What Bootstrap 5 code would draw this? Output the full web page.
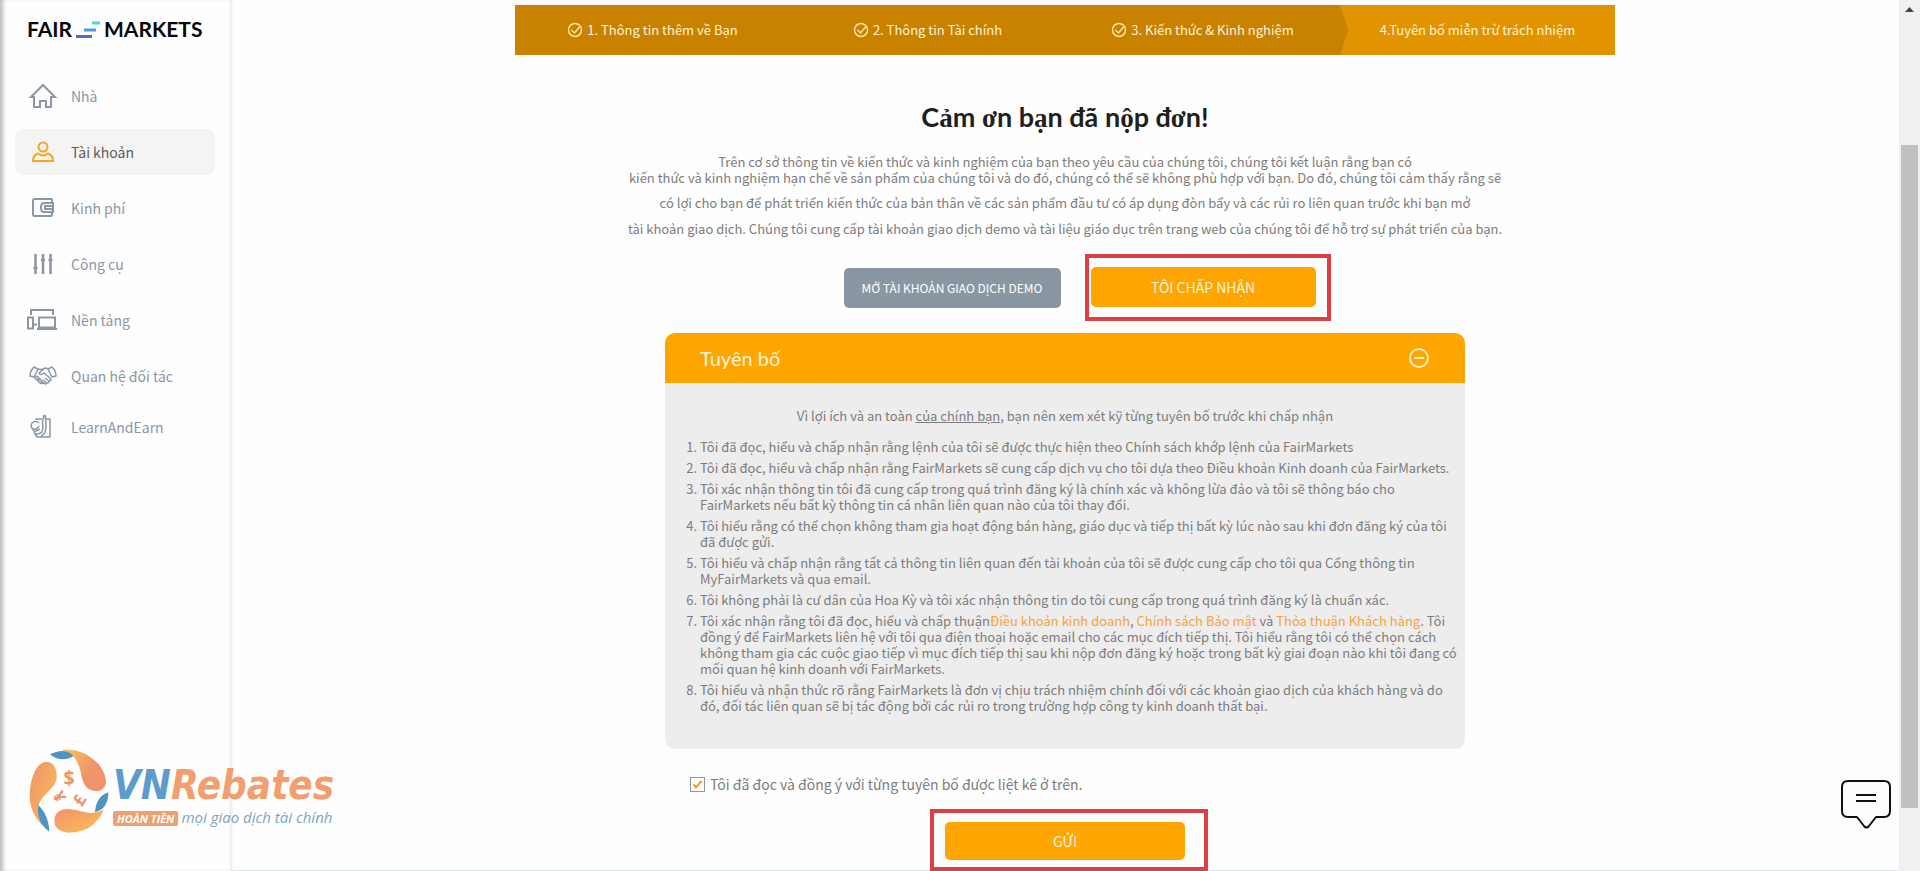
<!DOCTYPE html>
<html lang="vi">
<head>
<meta charset="utf-8">
<meta name="viewport" content="width=device-width, initial-scale=1">
<title>FairMarkets</title>
<link href="https://cdn.jsdelivr.net/npm/bootstrap@5.3.0/dist/css/bootstrap.min.css" rel="stylesheet">
<style>
body{font-family:"Noto Sans CJK SC","Noto Sans",sans-serif;font-size:13px;line-height:16px;color:#7c7c7c;background:#fefefe}
.side{width:231px;border-right:1px solid #e9e9e9;box-shadow:inset 5px 0 4px -2px #bbb,1px 0 3px #eee;padding:0 15px}
.brand{height:58px;padding:0 12px;font:700 21px/58px Lato,"Open Sans",sans-serif;color:#080808;text-decoration:none;gap:4px}
.side-nav{padding-top:15px}
.side-link{height:46px;margin-bottom:10px;border-radius:8px;padding-left:11px;gap:13px;font-size:14px;color:#8b97a3;text-decoration:none}
.side-link.on{background:#f4f4f4;color:#5d5d5d}
.side-link.short{margin-top:-5px}
.side-link svg{width:32px;height:32px;fill:none;stroke:#8b97a3;stroke-width:2}
.side-link svg.fine{stroke-width:1.5}
.side-link.on svg{stroke:#f5a623}
.wide{max-width:1100px}
.steps{height:50px;margin-top:5px;background:#c88200;color:#fff3d6}
.step-now{background:#e29300}
.step-item{gap:4px}
.step-arrow{left:0;top:0;height:100%;width:8px}
h1{font:700 27px/32px Lato,"Open Sans",sans-serif;color:#1f1f1f;margin:46px 0 20px}
h1 span{font-family:"Liberation Serif",serif}
.loose{line-height:26px;margin:4px 0 12px}
.choices{padding-left:44px;margin-bottom:12px}
.act{border:0;border-radius:5px;height:40px;color:#fff6df;background:#ffa500;font-size:14px}
.act.demo{width:217px;background:#8a97a3;color:#fff;font-size:12px;margin-right:24px}
.act.accept{width:225px}
.act.send{width:240px;height:38px}
.ring{border:4px solid #dc4045}
.ring-a{padding:9px 11px 10px 2px}
.ring-b{padding:9px 19px 7px 11px;margin-left:8px}
.panel{max-width:800px;border-radius:10px;background:#ededed;overflow:hidden}
.panel-top{height:50px;background:#ffa500;color:#fff6df;font:400 20px/50px Lato,"Noto Sans",sans-serif;padding:0 35px;border:0}
.panel-body{padding:25px 0 30px 35px}
.panel-body p{padding-right:35px}
.panel-body ol{padding:0;margin:15px 0 0}
.panel-body li{margin-bottom:5px}
.panel-body a{color:#f9a13a;text-decoration:none}
.agree{max-width:800px;padding:25px 0 15px 25px;font-size:14px;line-height:20px;gap:5px}
.agree input{appearance:none;width:15px;height:15px;margin:0;border:1px solid #8a97a3;background:#fff url("data:image/svg+xml,%3Csvg xmlns='http://www.w3.org/2000/svg' viewBox='0 0 13 13'%3E%3Cpath d='M2.500 6.500l2.500 3 5.500-6.500' fill='none' stroke='%23f5a010' stroke-width='2'/%3E%3C/svg%3E")}
.rail{width:21px;background:#f0f0f0;padding:7px 2px 63px}
.thumb{background:#c0c0c0;margin-top:133px}
.mark-logo{left:29px;bottom:37px}
.mark-name{font:italic 700 40px/40px "DejaVu Sans Condensed","DejaVu Sans",sans-serif;color:#f29f70}
.mark-name b{color:#5b9bcd}
.mark-tag{font:italic 400 15px/16px "Open Sans",sans-serif;color:#7ba5bd}
.mark-tag b{background:#f29f70;color:#fff;border-radius:2px;padding:0 4px;font-size:11px;margin-right:3px}
.chat{right:29px;bottom:41px;border:0;background:none;padding:0}
</style>
</head>
<body class="overflow-hidden">
<div class="d-flex vh-100 position-relative">
<aside class="side flex-shrink-0">
<a href="#" class="brand d-flex align-items-center">FAIR<svg width="24" height="17" viewBox="0 0 24 17"><path d="M16 2h8" stroke="#43dccb" stroke-width="3"/><path d="M8 9h12" stroke="#4b9bd5" stroke-width="3"/><path d="M0 15.500h16" stroke="#5a63d0" stroke-width="3"/></svg>MARKETS</a>
<nav class="side-nav">
<a href="#" class="side-link d-flex align-items-center"><svg viewBox="0 0 32 32"><path d="M5 17L17 5l12 12h-4v10h-5v-6h-6v6H8V17z"/></svg>Nhà</a>
<a href="#" class="side-link on d-flex align-items-center"><svg viewBox="0 0 32 32"><circle cx="17" cy="11" r="4.500"/><path d="M12 17.500c-3 1-5 4-5 7.500h20c0-3.500-2-6.500-5-7.500-3 2.500-7 2.500-10 0z"/></svg>Tài khoản</a>
<a href="#" class="side-link d-flex align-items-center"><svg viewBox="0 0 32 32"><path d="M26 11V8q0-1-1-1H9q-2 0-2 2v13q0 2 2 2h16q1 0 1-1v-3M27 11H18q-3 0-3 4.500t3 4.500h9zM27 14h-8v3h8z"/></svg>Kinh phí</a>
<a href="#" class="side-link d-flex align-items-center"><svg viewBox="0 0 32 32"><path d="M9.500 6v20M17 6v20M24.500 6v20M7.500 20h4M15 12h4M22.500 12h4" stroke-width="2.500"/></svg>Công cụ</a>
<a href="#" class="side-link d-flex align-items-center"><svg viewBox="0 0 32 32"><path d="M5 11V6h22v5M2 13.500h5v11H2zM13 13.500h16v10H13zM11 25h20M8 20.500h3"/></svg>Nền tảng</a>
<a href="#" class="side-link d-flex align-items-center"><svg class="fine" viewBox="0 0 32 32" stroke-linejoin="round"><path d="M8 7l4 2-4 8-4-1q0-5 4-9zM26 7l-4 2 4 8 4-1q0-5-4-9zM12 9q4 1 6-.500 2-1 4 .500M18 9l-5 4q1 3 5 0l7 6q0 2-2 2l-4-3M8 17l6 6q3 1 4 0M23 21q0 2-2 2l-4-3M21 23q-1 2-3 0l-3-2M9 18l2-2 2 2-2 3M12 21l2-2 2 2-2 2"/></svg>Quan hệ đối tác</a>
<a href="#" class="side-link short d-flex align-items-center"><svg class="fine" viewBox="0 0 32 32" stroke-linejoin="round"><path d="M10 9V8h6M20 8h4v18H11l-2-3M18 4l-1 5q-1 2 0 7 0 7-6 7M19 4q1 4 1 12 0 7-5 9M13 12q-4-3-7 0-2 4 1 6 4 1 6-3M7 18q0 3 3 2l4-2M8 21q1 3 4 2"/></svg>LearnAndEarn</a>
</nav>
</aside>
<main class="flex-grow-1 text-center border-bottom">
<div class="wide mx-auto">
<div class="steps row g-0">
<div class="step-item col d-flex align-items-center justify-content-center"><svg width="16" height="16" fill="none" stroke="#ffe2a0" stroke-width="1.500"><circle cx="8" cy="8" r="6.500"/><path d="M4.500 8l3 3 5-6"/></svg>1. Thông tin thêm về Bạn</div>
<div class="step-item col d-flex align-items-center justify-content-center"><svg width="16" height="16" fill="none" stroke="#ffe2a0" stroke-width="1.500"><circle cx="8" cy="8" r="6.500"/><path d="M4.500 8l3 3 5-6"/></svg>2. Thông tin Tài chính</div>
<div class="step-item col d-flex align-items-center justify-content-center"><svg width="16" height="16" fill="none" stroke="#ffe2a0" stroke-width="1.500"><circle cx="8" cy="8" r="6.500"/><path d="M4.500 8l3 3 5-6"/></svg>3. Kiến thức &amp; Kinh nghiệm</div>
<div class="step-item step-now col d-flex align-items-center justify-content-center position-relative"><svg class="step-arrow position-absolute" viewBox="0 0 8 50" preserveAspectRatio="none"><path d="M0 0l8 25-8 25z" fill="#c88200"/></svg>4.Tuyên bố miễn trừ trách nhiệm</div>
</div>
<h1>C<span>ả</span>m <span>ơ</span>n b<span>ạ</span>n đã n<span>ộ</span>p đ<span>ơ</span>n!</h1>
<p class="mb-0">Trên cơ sở thông tin về kiến thức và kinh nghiệm của bạn theo yêu cầu của chúng tôi, chúng tôi kết luận rằng bạn có<br>kiến thức và kinh nghiệm hạn chế về sản phẩm của chúng tôi và do đó, chúng có thể sẽ không phù hợp với bạn. Do đó, chúng tôi cảm thấy rằng sẽ</p>
<p class="loose">có lợi cho bạn để phát triển kiến thức của bản thân về các sản phẩm đầu tư có áp dụng đòn bẩy và các rủi ro liên quan trước khi bạn mở<br>tài khoản giao dịch. Chúng tôi cung cấp tài khoản giao dịch demo và tài liệu giáo dục trên trang web của chúng tôi để hỗ trợ sự phát triển của bạn.</p>
<div class="choices d-flex justify-content-center align-items-center">
<button type="button" class="act demo">MỞ TÀI KHOẢN GIAO DỊCH DEMO</button>
<div class="ring ring-a"><button type="button" class="act accept">TÔI CHẤP NHẬN</button></div>
</div>
</div>
<section class="panel mx-auto">
<button type="button" class="panel-top w-100 d-flex align-items-center justify-content-between">Tuyên bố<svg width="22" height="22" fill="none" stroke="#fff0c8" stroke-width="2"><circle cx="11" cy="11" r="9"/><path d="M6 11h10"/></svg></button>
<div class="panel-body">
<p class="mb-0">Vì lợi ích và an toàn <u>của chính bạn</u>, bạn nên xem xét kỹ từng tuyên bố trước khi chấp nhận</p>
<ol class="text-start">
<li>Tôi đã đọc, hiểu và chấp nhận rằng lệnh của tôi sẽ được thực hiện theo Chính sách khớp lệnh của FairMarkets</li>
<li>Tôi đã đọc, hiểu và chấp nhận rằng FairMarkets sẽ cung cấp dịch vụ cho tôi dựa theo Điều khoản Kinh doanh của FairMarkets.</li>
<li>Tôi xác nhận thông tin tôi đã cung cấp trong quá trình đăng ký là chính xác và không lừa đảo và tôi sẽ thông báo cho<br>FairMarkets nếu bất kỳ thông tin cá nhân liên quan nào của tôi thay đổi.</li>
<li>Tôi hiểu rằng có thể chọn không tham gia hoạt động bán hàng, giáo dục và tiếp thị bất kỳ lúc nào sau khi đơn đăng ký của tôi<br>đã được gửi.</li>
<li>Tôi hiểu và chấp nhận rằng tất cả thông tin liên quan đến tài khoản của tôi sẽ được cung cấp cho tôi qua Cổng thông tin<br>MyFairMarkets và qua email.</li>
<li>Tôi không phải là cư dân của Hoa Kỳ và tôi xác nhận thông tin do tôi cung cấp trong quá trình đăng ký là chuẩn xác.</li>
<li>Tôi xác nhận rằng tôi đã đọc, hiểu và chấp thuận<a href="#">Điều khoản kinh doanh</a>, <a href="#">Chính sách Bảo mật</a> và <a href="#">Thỏa thuận Khách hàng</a>. Tôi<br>đồng ý để FairMarkets liên hệ với tôi qua điện thoại hoặc email cho các mục đích tiếp thị. Tôi hiểu rằng tôi có thể chọn cách<br>không tham gia các cuộc giao tiếp vì mục đích tiếp thị sau khi nộp đơn đăng ký hoặc trong bất kỳ giai đoạn nào khi tôi đang có<br>mối quan hệ kinh doanh với FairMarkets.</li>
<li>Tôi hiểu và nhận thức rõ rằng FairMarkets là đơn vị chịu trách nhiệm chính đối với các khoản giao dịch của khách hàng và do<br>đó, đối tác liên quan sẽ bị tác động bởi các rủi ro trong trường hợp công ty kinh doanh thất bại.</li>
</ol>
</div>
</section>
<div class="agree mx-auto d-flex align-items-center"><input type="checkbox" id="agree" checked><label for="agree">Tôi đã đọc và đồng ý với từng tuyên bố được liệt kê ở trên.</label></div>
<div class="ring ring-b d-inline-block"><button type="submit" class="act send">GỬI</button></div>
</main>
<div class="rail d-flex flex-column flex-shrink-0 align-items-stretch"><svg class="mx-auto" width="9" height="5"><path d="M0 5l4.500-5L9 5z" fill="#444"/></svg><div class="thumb flex-grow-1"></div></div>
<div class="mark-logo position-absolute d-flex align-items-center">
<svg width="80" height="85" viewBox="87 57 240 255"><defs><linearGradient id="g" x2="1" y2="1"><stop stop-color="#f0926a"/><stop offset="1" stop-color="#fac158"/></linearGradient><linearGradient id="h" x2="1" y2="1"><stop stop-color="#fac158"/><stop offset=".6" stop-color="#f0926a"/></linearGradient></defs>
<path fill="url(#g)" d="M150 305C100 270 85 225 90 180c5-50 25-85 50-85 25 2 32 30 30 50-5 35-52 50-55 90 0 30 15 55 35 70z"/>
<path fill="url(#h)" d="M185 60c75-10 135 50 133 100-6 20-18 25-33 23-23-3-35-18-40-43-7-40-20-70-60-80z"/>
<path fill="url(#g)" d="M312 238c-22 52-62 70-107 70-30-3-42-18-42-38 2-25 22-33 42-33 35 1 70 25 107 1z"/>
<g fill="#4f93c4"><path d="M150 73c25-13 55-15 70 5-20 14-50 14-70-5z"/><path d="M115 225c15 15 32 40 33 80-28-20-38-50-33-80z"/><path d="M325 187c0 28-10 53-40 60 2-32 15-52 40-60z"/></g>
<g fill="#f0926a" font-family="Open Sans" font-weight="700" font-size="58" text-anchor="middle"><text x="207" y="165">$</text><text font-size="50" transform="translate(178 200) rotate(60)" y="18">¥</text><text font-size="50" transform="translate(238 210) rotate(-60)" y="18">£</text></g></svg>
<div class="ps-1 pt-2"><div class="mark-name"><b>VN</b>Rebates</div><div class="mark-tag mt-1"><b>HOÀN TIỀN</b>mọi giao dịch tài chính</div></div>
</div>
<button type="button" class="chat position-absolute" aria-label="Chat"><svg width="50" height="50" fill="none" stroke="#111" stroke-width="2" stroke-linejoin="round"><path d="M7 1h36q6 0 6 6v24q0 6-6 6h-8l-7 9q-2.500 3-5 0l-7-9H7q-6 0-6-6V7q0-6 6-6z"/><path d="M15 15h20M15 21h20"/></svg></button>
</div>
<script src="https://cdn.jsdelivr.net/npm/bootstrap@5.3.0/dist/js/bootstrap.bundle.min.js"></script>
</body>
</html>
